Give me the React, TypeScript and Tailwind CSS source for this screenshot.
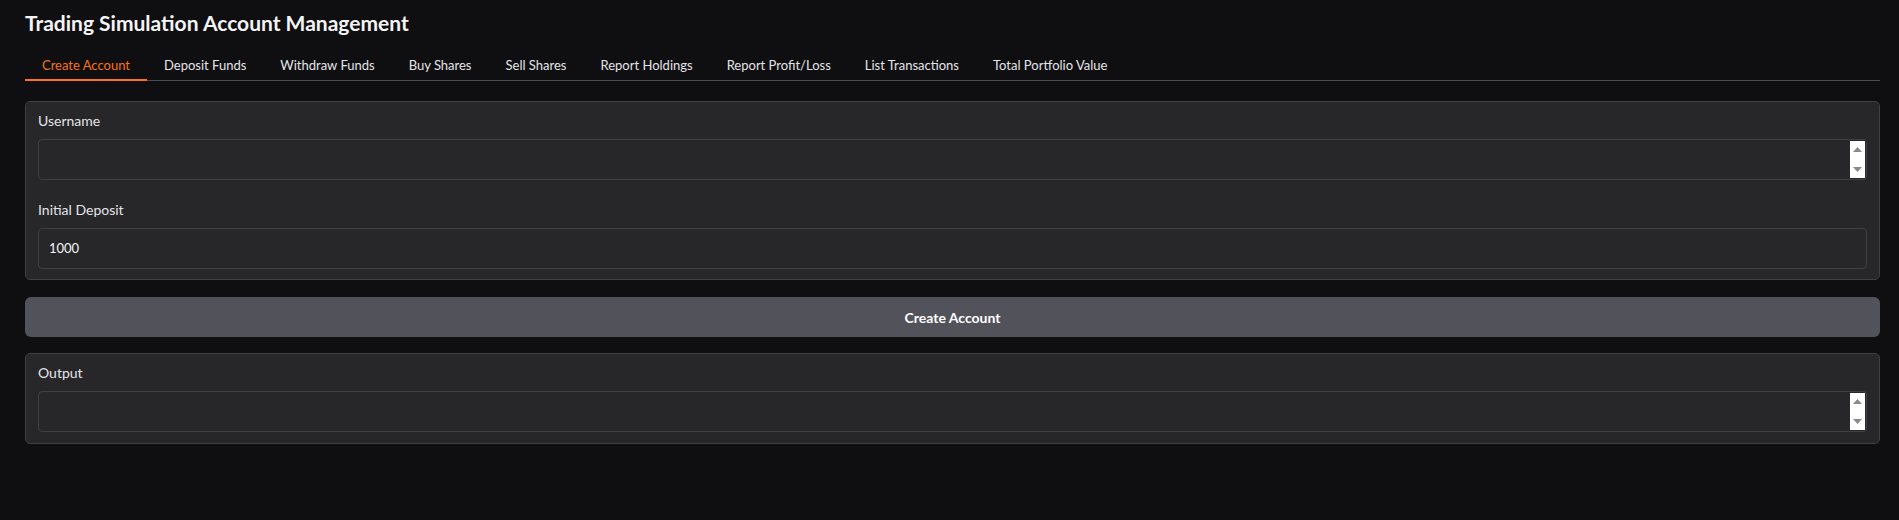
import { useState } from "react"

const tabs = [
  "Create Account",
  "Deposit Funds",
  "Withdraw Funds",
  "Buy Shares",
  "Sell Shares",
  "Report Holdings",
  "Report Profit/Loss",
  "List Transactions",
  "Total Portfolio Value",
]

// fake textarea scrollbar (the white strip with the two grey arrows)
function ScrollStrip() {
  return (
    <div className="absolute right-[1px] top-[1px] bottom-[1px] w-[15px] bg-white flex flex-col items-center justify-between py-[6px]">
      <svg width="9" height="5" viewBox="0 0 9 5">
        <path d="M4.5 0 L9 5 L0 5 Z" fill="#8a8a8a" />
      </svg>
      <svg width="9" height="5" viewBox="0 0 9 5">
        <path d="M0 0 L9 0 L4.5 5 Z" fill="#8a8a8a" />
      </svg>
    </div>
  )
}

function Field({ label, value, scroll, h = "h-[41px]" }: { label: string; value?: string; scroll?: boolean; h?: string }) {
  return (
    <div className="flex flex-col">
      <span className="text-[14px] leading-[20px] text-[#e4e4e7] mb-[8px]">{label}</span>
      <div className={`relative ${h} rounded-[4px] border border-[#3f3f46] bg-[#27272a] flex items-center px-[10px]`}>
        <span className="text-[13px] text-[#f4f4f5]">{value}</span>
        {scroll && <ScrollStrip />}
      </div>
    </div>
  )
}

export default function App() {
  const [active, setActive] = useState(0)

  return (
    <div
      className="min-h-[520px] bg-[#0f0f11] pl-[25px] pr-[19px] pt-[8px]"
      style={{ fontFamily: "Lato, 'Noto Sans', sans-serif" }}
    >
      {/* Titulo */}
      <h1 className="text-[21px] leading-[30px] font-bold text-[#f4f4f5]">Trading Simulation Account Management</h1>

      {/* Tabs */}
      <div className="mt-[10px] flex border-b border-[#4a4a52]">
        {tabs.map((t, i) => (
          <button
            key={t}
            onClick={() => setActive(i)}
            className={`relative h-[32px] pt-[4px] px-[17px] text-[13px] ${
              active === i ? "text-[#f97316]" : "text-[#e4e4e7]"
            }`}
          >
            {t}
            {active === i && <span className="absolute left-0 right-0 bottom-[-1px] h-[2px] bg-[#f97316]" />}
          </button>
        ))}
      </div>

      {/* Formulario */}
      <div className="mt-[20px] rounded-[5px] border border-[#3f3f46] bg-[#27272a] px-[12px] pt-[9px] pb-[10px] flex flex-col gap-[20px]">
        <Field label="Username" scroll />
        <Field label="Initial Deposit" value="1000" />
      </div>

      <button className="mt-[17px] w-full h-[40px] rounded-[6px] bg-[#52525b] text-[14px] font-bold text-white">
        Create Account
      </button>

      {/* Salida */}
      <div className="mt-[16px] rounded-[5px] border border-[#3f3f46] bg-[#27272a] px-[12px] pt-[9px] pb-[11px]">
        <Field label="Output" scroll h="h-[41px]" />
      </div>
    </div>
  )
}
